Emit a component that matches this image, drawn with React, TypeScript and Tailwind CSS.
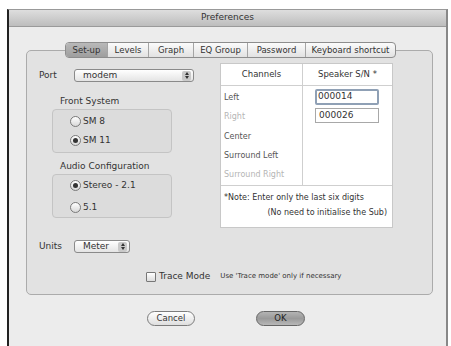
import React from "react";

const tabs = ["Set-up", "Levels", "Graph", "EQ Group", "Password", "Keyboard shortcut"];
const tabWidths = ["w-[41px]", "w-[41px]", "w-[45px]", "w-[54px]", "w-[58px]", "w-[90px]"];

const channels = [
  { name: "Left", dim: false },
  { name: "Right", dim: true },
  { name: "Center", dim: false },
  { name: "Surround Left", dim: false },
  { name: "Surround Right", dim: true },
];

function Radio({ checked, label }: { checked?: boolean; label: string }) {
  return (
    <div className="flex items-center gap-[2px] h-[19px]">
      <span className="w-[11px] h-[11px] rounded-full border border-[#7a7a7a] bg-gradient-to-b from-[#ffffff] to-[#d8d8d8] flex items-center justify-center">
        {checked && <span className="w-[5px] h-[5px] rounded-full bg-[#333]" />}
      </span>
      <span className="text-[9px] text-[#333]">{label}</span>
    </div>
  );
}

function Popup({ value, width }: { value: string; width: string }) {
  return (
    <div
      className={`${width} h-[13px] rounded-[3px] border border-[#8a8a8a] bg-gradient-to-b from-[#ffffff] to-[#e4e4e4] flex items-center justify-between pl-[8px] pr-[2px]`}
    >
      <span className="text-[9px] text-[#333] leading-none">{value}</span>
      <span className="w-[9px] h-[10px] bg-[#c9c9c9] rounded-[2px] flex flex-col items-center justify-center gap-[1px]">
        <span className="w-0 h-0 border-l-[2px] border-r-[2px] border-b-[3px] border-l-transparent border-r-transparent border-b-[#333]" />
        <span className="w-0 h-0 border-l-[2px] border-r-[2px] border-t-[3px] border-l-transparent border-r-transparent border-t-[#333]" />
      </span>
    </div>
  );
}

export default function App() {
  return (
    <div
      className="w-[451px] h-[346px] bg-white pl-[7px] pt-[9px] pr-[3px] overflow-hidden"
      style={{ fontFamily: '"DejaVu Sans", sans-serif' }}
    >
      <div className="h-full border-l-2 border-l-[#222] border-r-2 border-r-[#888] border-t border-t-[#999] bg-[#ececec] flex flex-col">
        {/* title bar */}
        <div className="h-[17px] bg-gradient-to-b from-[#dedede] to-[#bdbdbd] border-b border-[#9a9a9a] flex items-center justify-center">
          <span className="text-[9px] text-[#333]">Preferences</span>
        </div>

        {/* tabs + box */}
        <div className="ml-[17px] w-[407px] mt-[15px] flex flex-col">
          <div className="flex justify-center relative z-10 pl-[2px]">
            <div className="flex h-[16px] rounded-[4px] border border-[#8d8d8d] overflow-hidden bg-gradient-to-b from-[#fbfbfb] to-[#e2e2e2]">
              {tabs.map((t, i) => (
                <div
                  key={t}
                  className={`${tabWidths[i]} flex items-center justify-center text-[8.5px] text-[#333] ${
                    i > 0 ? "border-l border-[#a5a5a5]" : ""
                  } ${i === 0 ? "bg-gradient-to-b from-[#b9b9b9] to-[#9e9e9e]" : ""}`}
                >
                  {t}
                </div>
              ))}
            </div>
          </div>
          <div className="-mt-[8px] h-[245px] rounded-[5px] border border-[#ababab] bg-[#e2e2e2] flex flex-col pt-[14px]">
            <div className="flex">
              {/* left column */}
              <div className="w-[195px] flex flex-col">
                <div className="flex items-center h-[13px] mt-[4px] pl-[12px]">
                  <span className="w-[35px] text-[9px] text-[#333]">Port</span>
                  <Popup value="modem" width="w-[120px]" />
                </div>
                <div className="ml-[25px] mt-[13px] flex flex-col">
                  <span className="pl-[8px] text-[9px] text-[#333] h-[12px] leading-[12px]">Front System</span>
                  <div className="mt-[2px] w-[120px] h-[44px] rounded-[4px] border border-[#c4c4c4] bg-[#dcdcdc] pl-[17px] pt-[2px]">
                    <Radio label="SM 8" />
                    <Radio checked label="SM 11" />
                  </div>
                  <span className="mt-[7px] pl-[8px] text-[9px] text-[#333] h-[12px] leading-[12px]">Audio Configuration</span>
                  <div className="mt-[2px] w-[120px] h-[44px] rounded-[4px] border border-[#c4c4c4] bg-[#dcdcdc] pl-[17px] pt-[1px]">
                    <Radio checked label="Stereo - 2.1" />
                    <div className="mt-[3px]">
                      <Radio label="5.1" />
                    </div>
                  </div>
                </div>
              </div>

              {/* table */}
              <div className="w-[173px] h-[165px] mt-[-2px] -ml-[2px] bg-white border border-[#c8c8c8] flex flex-col">
                <div className="flex h-[22px] border-b border-[#cfcfcf]">
                  <div className="w-[82px] border-r border-[#cfcfcf] flex items-center justify-center text-[8.5px] text-[#333]">
                    Channels
                  </div>
                  <div className="flex-1 flex items-center justify-center text-[8.5px] text-[#333]">Speaker S/N *</div>
                </div>
                <div className="flex h-[100px] border-b border-[#cfcfcf]">
                  <div className="w-[82px] border-r border-[#cfcfcf] flex flex-col pt-[2px] pl-[3px]">
                    {channels.map((c) => (
                      <div
                        key={c.name}
                        className={`h-[19.5px] flex items-center text-[8px] ${c.dim ? "text-[#b5b5b5]" : "text-[#555]"}`}
                      >
                        {c.name}
                      </div>
                    ))}
                  </div>
                  <div className="flex-1 flex flex-col pl-[12px] pt-[3px] gap-[3px]">
                    <div className="w-[64px] h-[16px] border-2 border-[#8fa0b5] rounded-[2px] bg-white flex items-center pl-[1px] text-[9px] text-[#333]">
                      000014
                    </div>
                    <div className="w-[64px] h-[15px] border border-[#a8a8a8] bg-white flex items-center pl-[3px] text-[9px] text-[#333]">
                      000026
                    </div>
                  </div>
                </div>
                <div className="flex-1 flex flex-col px-[3px] pt-[4px] text-[8px] text-[#333]">
                  <span className="h-[15px] leading-[15px]">*Note: Enter only the last six digits</span>
                  <span className="h-[15px] leading-[15px] text-right pr-[2px]">(No need to initialise the Sub)</span>
                </div>
              </div>
            </div>

            <div className="flex items-center h-[13px] mt-[12px] pl-[12px]">
              <span className="w-[35px] text-[9px] text-[#333]">Units</span>
              <Popup value="Meter" width="w-[56px]" />
            </div>

            <div className="flex items-center h-[13px] mt-[17px] pl-[119px]">
              <span className="w-[10px] h-[10px] border border-[#777] rounded-[1px] bg-gradient-to-b from-[#ffffff] to-[#dcdcdc]" />
              <span className="ml-[3px] text-[9px] text-[#333]">Trace Mode</span>
              <span className="ml-[10px] text-[7px] text-[#333]">Use 'Trace mode' only if necessary</span>
            </div>
          </div>
        </div>

        {/* buttons */}
        <div className="flex mt-[16px] h-[15px]">
          <div className="ml-[138px] w-[48px] h-[15px] rounded-full border border-[#7c7c7c] bg-gradient-to-b from-[#ffffff] to-[#dedede] flex items-center justify-center text-[8.5px] text-[#333]">
            Cancel
          </div>
          <div className="ml-[61px] w-[49px] h-[15px] rounded-full border border-[#666] bg-gradient-to-b from-[#b4b4b4] via-[#9a9a9a] to-[#b8b8b8] flex items-center justify-center text-[8.5px] text-[#222]">
            OK
          </div>
        </div>
      </div>
    </div>
  );
}
